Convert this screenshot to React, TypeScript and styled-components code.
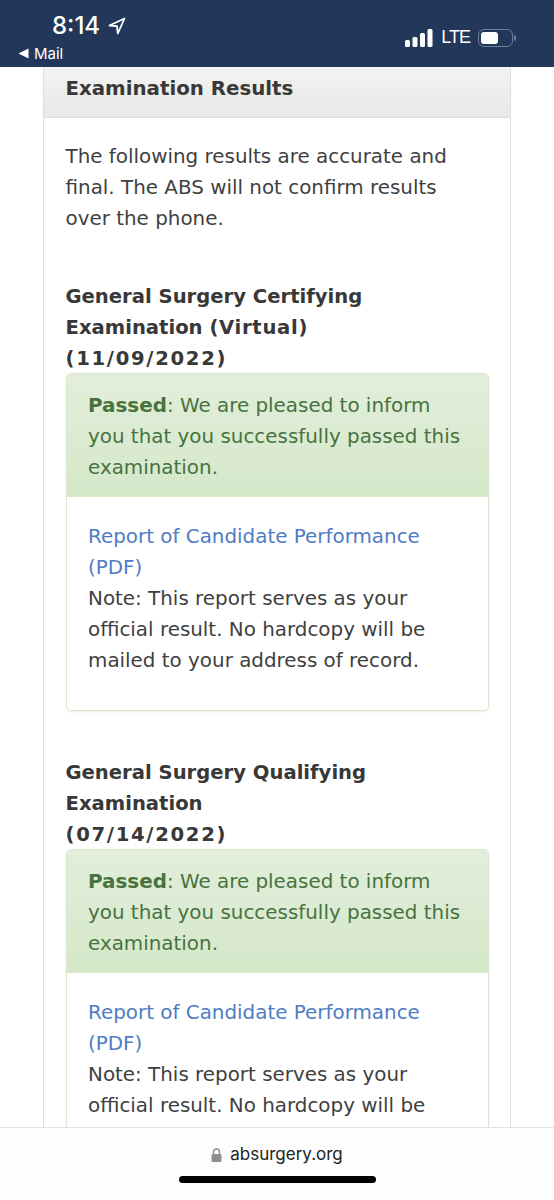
import styled, { createGlobalStyle } from 'styled-components'

const GlobalStyle = createGlobalStyle`
  html, body {
    margin: 0;
    padding: 0;
    background: #fff;
  }
`

const Screen = styled.div`
  width: 554px;
  height: 1200px;
  overflow: hidden;
  display: flex;
  flex-direction: column;
  background: #fff;
  font-family: 'DejaVu Sans', Verdana, sans-serif;
  color: #3f3f3f;
`

const StatusBar = styled.div`
  flex: none;
  height: 67px;
  background: #22375a;
  color: #fff;
  display: flex;
  justify-content: space-between;
  box-sizing: border-box;
  padding: 0 41px 0 18px;
`

const StatusLeft = styled.div`
  display: flex;
  flex-direction: column;
`

const TimeRow = styled.div`
  display: flex;
  align-items: center;
  gap: 8px;
  margin: 12px 0 0 34px;
  font-family: Inter, 'Liberation Sans', sans-serif;
  font-size: 24px;
  font-weight: 500;
  line-height: 28px;
`

const BackRow = styled.div`
  display: flex;
  align-items: center;
  gap: 5px;
  margin-top: 5px;
  font-family: Inter, 'Liberation Sans', sans-serif;
  font-size: 15px;
  line-height: 17px;
`

const StatusRight = styled.div`
  display: flex;
  align-items: center;
  gap: 8px;
  margin-top: 8px;
  font-family: 'Liberation Sans', sans-serif;
  font-size: 18px;
  letter-spacing: -1px;
`

const Content = styled.div`
  flex: 1;
  min-height: 0;
  overflow: hidden;
`

const Panel = styled.div`
  width: 468px;
  box-sizing: border-box;
  margin-left: 43px;
  border: solid #dedede;
  border-width: 0 1px;
`

const PanelHeading = styled.div`
  height: 51px;
  box-sizing: border-box;
  padding: 0 0 8px 21.5px;
  display: flex;
  align-items: center;
  background: linear-gradient(#f3f3f1, #e8e8e8);
  border-bottom: 1px solid #dddddd;
  font-size: 19.8px;
  font-weight: 700;
  color: #383838;
`

const PanelBody = styled.div`
  padding: 23px 21.5px 0;
`

const Para = styled.p`
  margin: 0 0 46px;
  font-size: 19.9px;
  line-height: 31px;
`

const ExamTitle = styled.h3`
  margin: 0 0 -1px;
  padding-top: 1px;
  font-size: 19.6px;
  font-weight: 700;
  line-height: 31px;
  color: #383838;
`

const Tracked = styled.span<{ $track: number }>`
  letter-spacing: ${(props) => props.$track}px;
`

const ResultCard = styled.div`
  margin-bottom: 45px;
  border: 1px solid #d8e7cd;
  border-radius: 5px;
  box-shadow: 0 1px 2px rgba(70, 115, 60, 0.12);
  overflow: hidden;
`

const ResultHeading = styled.div`
  padding: 16px 21.5px 14px;
  background: linear-gradient(#e2eedb, #d5e8c9);
  color: #47733f;
  font-size: 19.9px;
  line-height: 31px;

  b {
    font-weight: 700;
  }
`

const ResultBody = styled.div`
  padding: 24px 21.5px 34px;
  font-size: 19.9px;
  line-height: 31px;
`

const ReportLink = styled.a`
  display: block;
  color: #4f7cc4;
  text-decoration: none;
`

const BottomBar = styled.div`
  flex: none;
  height: 73px;
  background: #fdfdfd;
  border-top: 1px solid #e4e4e4;
  box-sizing: border-box;
  display: flex;
  flex-direction: column;
  align-items: center;
`

const UrlRow = styled.div`
  display: flex;
  align-items: center;
  gap: 8px;
  margin-top: 16px;
  font-family: Inter, 'Liberation Sans', sans-serif;
  font-size: 17px;
  line-height: 21px;
  color: #222;
`

const HomeIndicator = styled.div`
  width: 197px;
  height: 7px;
  margin-top: 11px;
  border-radius: 4px;
  background: #000;
`

const Battery = styled.div`
  width: 35px;
  height: 18px;
  box-sizing: border-box;
  border: 1px solid #6d7f9c;
  border-radius: 6px;
  padding: 2px;
  position: relative;

  &::before {
    content: '';
    display: block;
    width: 17px;
    height: 12px;
    border-radius: 3px;
    background: #fff;
  }

  &::after {
    content: '';
    position: absolute;
    right: -4px;
    top: 5px;
    width: 2px;
    height: 6px;
    border-radius: 0 2px 2px 0;
    background: #6d7f9c;
  }
`

const exams = [
  {
    name: 'General Surgery Certifying',
    kind: 'Examination',
    mode: '(Virtual)',
    date: '(11/09/2022)',
    note: ['Note: This report serves as your', 'official result. No hardcopy will be', 'mailed to your address of record.'],
  },
  {
    name: 'General Surgery Qualifying',
    kind: 'Examination',
    mode: '',
    date: '(07/14/2022)',
    note: ['Note: This report serves as your', 'official result. No hardcopy will be'],
  },
]

const App = () => {
  return (
    <Screen>
      <GlobalStyle />
      <StatusBar>
        <StatusLeft>
          <TimeRow>
            8:14
            <svg width="18" height="18" viewBox="0 0 18 18" fill="none" stroke="#fff" strokeWidth="1.8" strokeLinejoin="round">
              <path d="M16.5 1.5 L1.5 8.5 L9 9.2 L9.8 16.5 Z" />
            </svg>
          </TimeRow>
          <BackRow>
            <svg width="11" height="11" viewBox="0 0 11 11" fill="#fff">
              <path d="M0.5 5.5 L10.5 0.5 V10.5 Z" />
            </svg>
            Mail
          </BackRow>
        </StatusLeft>
        <StatusRight>
          <svg width="28" height="18" viewBox="0 0 28 18" fill="#fff">
            <rect x="0" y="11" width="5" height="7" rx="1.5" />
            <rect x="7.5" y="8" width="5" height="10" rx="1.5" />
            <rect x="15" y="4" width="5" height="14" rx="1.5" />
            <rect x="22.5" y="0" width="5" height="18" rx="1.5" />
          </svg>
          LTE
          <Battery />
        </StatusRight>
      </StatusBar>
      <Content>
        <Panel>
          <PanelHeading>Examination Results</PanelHeading>
          <PanelBody>
            <Para>
              The following results are accurate and
              <br />
              final. The ABS will not confirm results
              <br />
              over the phone.
            </Para>
            {exams.map((exam) => (
              <div key={exam.date}>
                <ExamTitle>
                  {exam.name}
                  <br />
                  {exam.kind} <Tracked $track={0.7}>{exam.mode}</Tracked>
                  <br />
                  <Tracked $track={1.7}>{exam.date}</Tracked>
                </ExamTitle>
                <ResultCard>
                  <ResultHeading>
                    <b>Passed</b>: We are pleased to inform
                    <br />
                    you that you successfully passed this
                    <br />
                    examination.
                  </ResultHeading>
                  <ResultBody>
                    <ReportLink href="#">
                      Report of Candidate Performance
                      <br />
                      (PDF)
                    </ReportLink>
                    {exam.note.map((line) => (
                      <div key={line}>{line}</div>
                    ))}
                  </ResultBody>
                </ResultCard>
              </div>
            ))}
          </PanelBody>
        </Panel>
      </Content>
      <BottomBar>
        <UrlRow>
          <svg width="11" height="14" viewBox="0 0 11 14">
            <path d="M2.5 6 V4 a3 3 0 0 1 6 0 V6" fill="none" stroke="#8e8e8e" strokeWidth="1.4" />
            <rect x="0.5" y="6" width="10" height="8" rx="1.5" fill="#8e8e8e" />
          </svg>
          absurgery.org
        </UrlRow>
        <HomeIndicator />
      </BottomBar>
    </Screen>
  )
}

export default App
